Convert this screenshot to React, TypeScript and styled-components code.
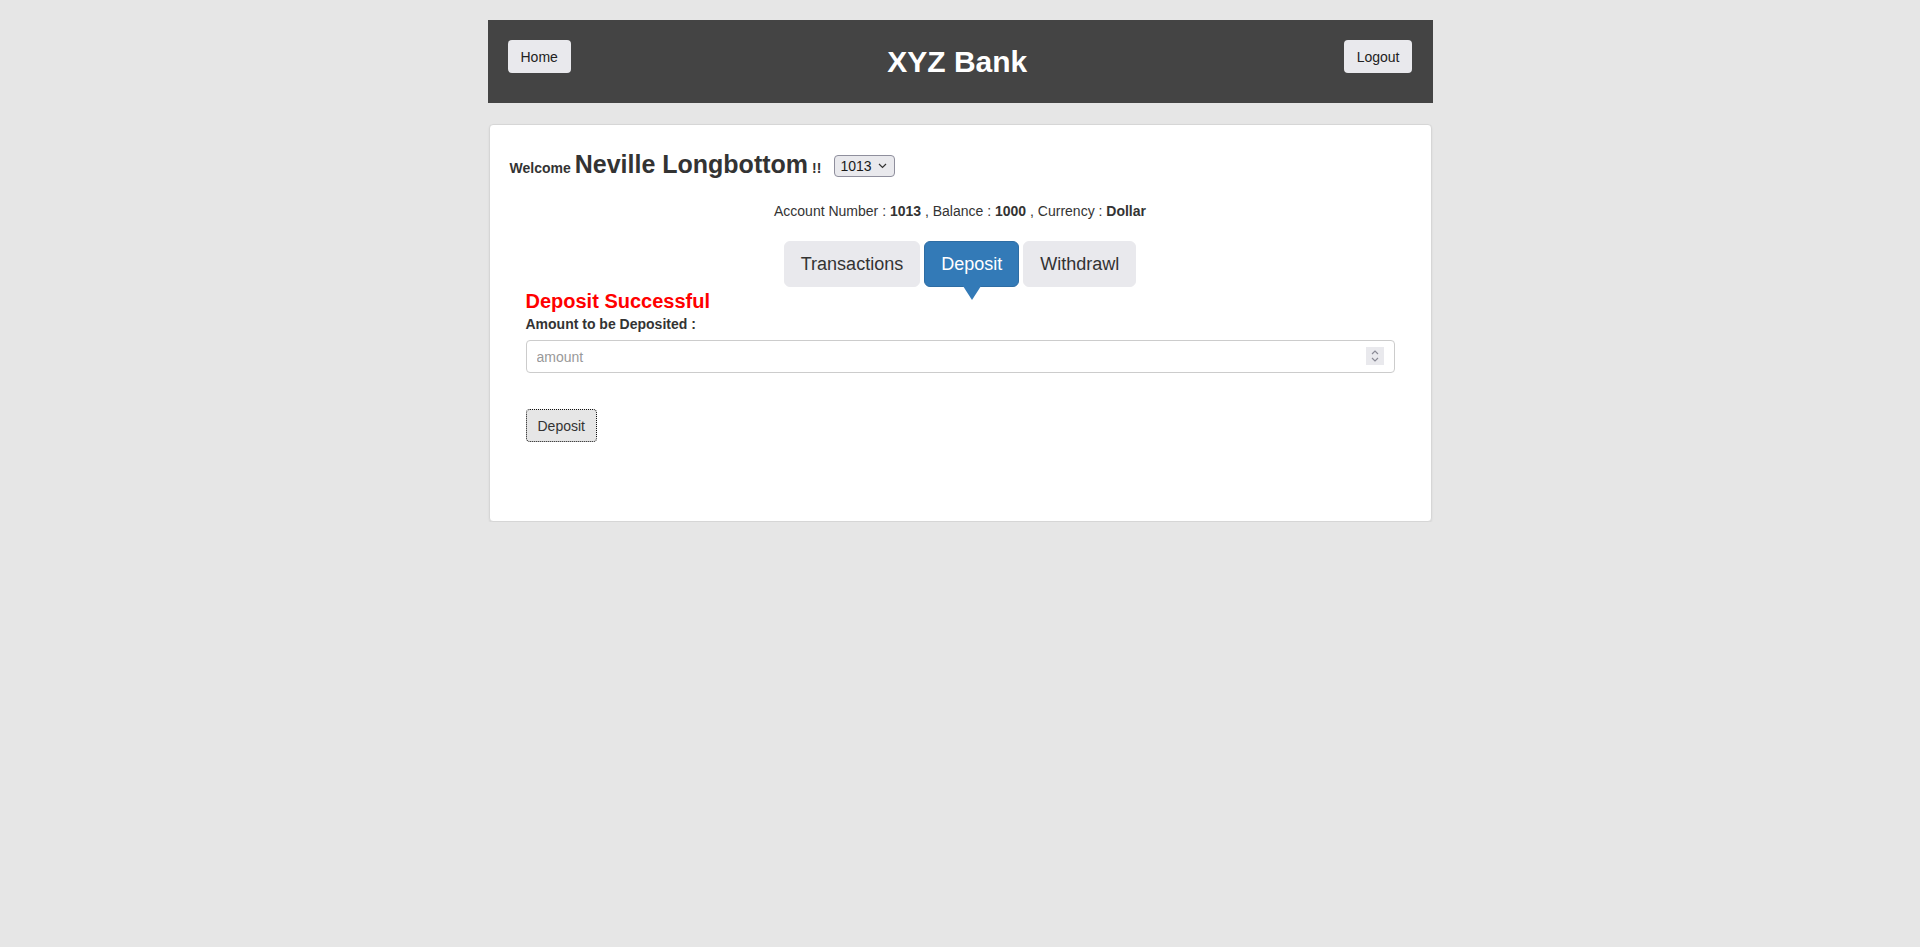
import React from "react";
import styled, { createGlobalStyle } from "styled-components";

const GlobalStyle = createGlobalStyle`
  html, body {
    margin: 0;
    padding: 0;
    background: #e6e6e6;
  }
  body {
    font-family: "Liberation Sans", Arial, Helvetica, sans-serif;
    font-size: 14px;
    line-height: 1.42857;
    color: #333;
  }
  * { box-sizing: border-box; }
`;

const Page = styled.div`
  width: 945px;
  margin: 0 auto;
  padding-top: 20px;
`;

const Header = styled.header`
  height: 83px;
  background: #444;
  padding: 0 20px 0 20px;
  display: flex;
  justify-content: space-between;
  align-items: flex-start;
`;

const HeaderButton = styled.button`
  margin-top: 20px;
  height: 33px;
  padding: 0 13px;
  border: 0;
  border-radius: 4px;
  background: #e9e9ed;
  color: #222;
  font-family: "Liberation Sans", Arial, sans-serif;
  font-size: 14px;
  cursor: pointer;
`;

const Title = styled.h1`
  align-self: center;
  margin: 0;
  color: #fff;
  font-size: 30px;
  font-weight: bold;
  line-height: 34px;
`;

const Card = styled.section`
  margin: 21px 1px 0 1px;
  height: 398px;
  background: #fff;
  border: 1px solid #d6d6d6;
  border-radius: 4px;
  box-shadow: 0 1px 2px rgba(0, 0, 0, 0.08);
  padding: 0 20px;
`;

const WelcomeRow = styled.div`
  margin-top: 25px;
  height: 30px;
  display: flex;
  align-items: baseline;
  font-weight: bold;
  font-size: 14px;
`;

const BigName = styled.span`
  font-size: 25px;
  margin-left: 4px;
  margin-right: 4px;
  line-height: 28px;
`;

const SelectWrap = styled.span`
  position: relative;
  display: inline-block;
  margin-left: 13px;
  align-self: center;
  margin-top: 2px;
`;

const Select = styled.select`
  appearance: none;
  -webkit-appearance: none;
  display: block;
  width: 61px;
  height: 22px;
  padding: 0 0 0 5px;
  border: 1px solid #8f8f9d;
  border-radius: 4px;
  background: #e9e9ed;
  color: #1a1a1a;
  font-family: "Liberation Sans", Arial, sans-serif;
  font-size: 14px;
  font-weight: normal;
`;

const Chevron = styled.svg`
  position: absolute;
  right: 8px;
  top: 8px;
  pointer-events: none;
`;

const AccountInfo = styled.div`
  margin-top: 21px;
  text-align: center;
  line-height: 20px;
`;

const Tabs = styled.div`
  margin-top: 20px;
  display: flex;
  justify-content: center;
  gap: 4px;
`;

const Tab = styled.button<{ $active?: boolean }>`
  position: relative;
  height: 46px;
  padding: 0 16px;
  border-radius: 6px;
  border: 1px solid ${(p) => (p.$active ? "#2e6da4" : "#e9e9ed")};
  background: ${(p) => (p.$active ? "#337ab7" : "#e9e9ed")};
  color: ${(p) => (p.$active ? "#fff" : "#333")};
  font-family: "Liberation Sans", Arial, sans-serif;
  font-size: 18px;
  line-height: 24px;
  cursor: pointer;

  ${(p) =>
    p.$active &&
    `
    &::after {
      content: "";
      position: absolute;
      left: 50%;
      bottom: -14px;
      margin-left: -9px;
      border-left: 9px solid transparent;
      border-right: 9px solid transparent;
      border-top: 14px solid #337ab7;
    }
  `}
`;

const FormArea = styled.div`
  padding: 0 16px;
`;

const SuccessMsg = styled.div`
  color: #f00;
  font-size: 20px;
  font-weight: bold;
  line-height: 22px;
  margin-top: 3px;
`;

const Label = styled.label`
  display: block;
  font-weight: bold;
  line-height: 20px;
  margin-top: 2px;
`;

const InputWrap = styled.div`
  position: relative;
  margin-top: 6px;
`;

const AmountInput = styled.input`
  display: block;
  width: 100%;
  height: 33px;
  padding: 6px 12px 6px 10px;
  border: 1px solid #ccc;
  border-radius: 4px;
  font-family: "Liberation Sans", Arial, sans-serif;
  font-size: 14px;
  color: #555;
  outline: none;
  &::placeholder {
    color: #999;
  }
`;

const Spinner = styled.span`
  position: absolute;
  right: 11px;
  top: 7px;
  width: 18px;
  height: 18px;
  background: #e9e9ed;
  display: flex;
  align-items: center;
  justify-content: center;
  pointer-events: none;
`;

const SubmitButton = styled.button`
  margin-top: 36px;
  height: 33px;
  padding: 0 11px;
  border: 1px dotted #111;
  border-radius: 4px;
  background: #e6e6e6;
  color: #333;
  font-family: "Liberation Sans", Arial, sans-serif;
  font-size: 14px;
  cursor: pointer;
`;

export default function App() {
  return (
    <>
      <GlobalStyle />
      <Page>
        <Header>
          <HeaderButton>Home</HeaderButton>
          <Title>XYZ Bank</Title>
          <HeaderButton>Logout</HeaderButton>
        </Header>
        <Card>
          <WelcomeRow>
            <span>Welcome</span>
            <BigName>Neville Longbottom</BigName>
            <span>!!</span>
            <SelectWrap>
              <Select defaultValue="1013">
                <option value="1013">1013</option>
                <option value="1014">1014</option>
                <option value="1015">1015</option>
              </Select>
              <Chevron width="9" height="6" viewBox="0 0 9 6">
                <path d="M1 1l3.5 3.5L8 1" fill="none" stroke="#333" strokeWidth="1.2" />
              </Chevron>
            </SelectWrap>
          </WelcomeRow>
          <AccountInfo>
            Account Number : <strong>1013</strong> , Balance : <strong>1000</strong> , Currency :{" "}
            <strong>Dollar</strong>
          </AccountInfo>
          <Tabs>
            <Tab>Transactions</Tab>
            <Tab $active>Deposit</Tab>
            <Tab>Withdrawl</Tab>
          </Tabs>
          <FormArea>
            <SuccessMsg>Deposit Successful</SuccessMsg>
            <Label>Amount to be Deposited :</Label>
            <InputWrap>
              <AmountInput type="text" placeholder="amount" />
              <Spinner>
                <svg width="10" height="14" viewBox="0 0 10 14">
                  <path d="M2 5l3-3 3 3M2 9l3 3 3-3" fill="none" stroke="#8a8a95" strokeWidth="1.2" />
                </svg>
              </Spinner>
            </InputWrap>
            <SubmitButton>Deposit</SubmitButton>
          </FormArea>
        </Card>
      </Page>
    </>
  );
}
